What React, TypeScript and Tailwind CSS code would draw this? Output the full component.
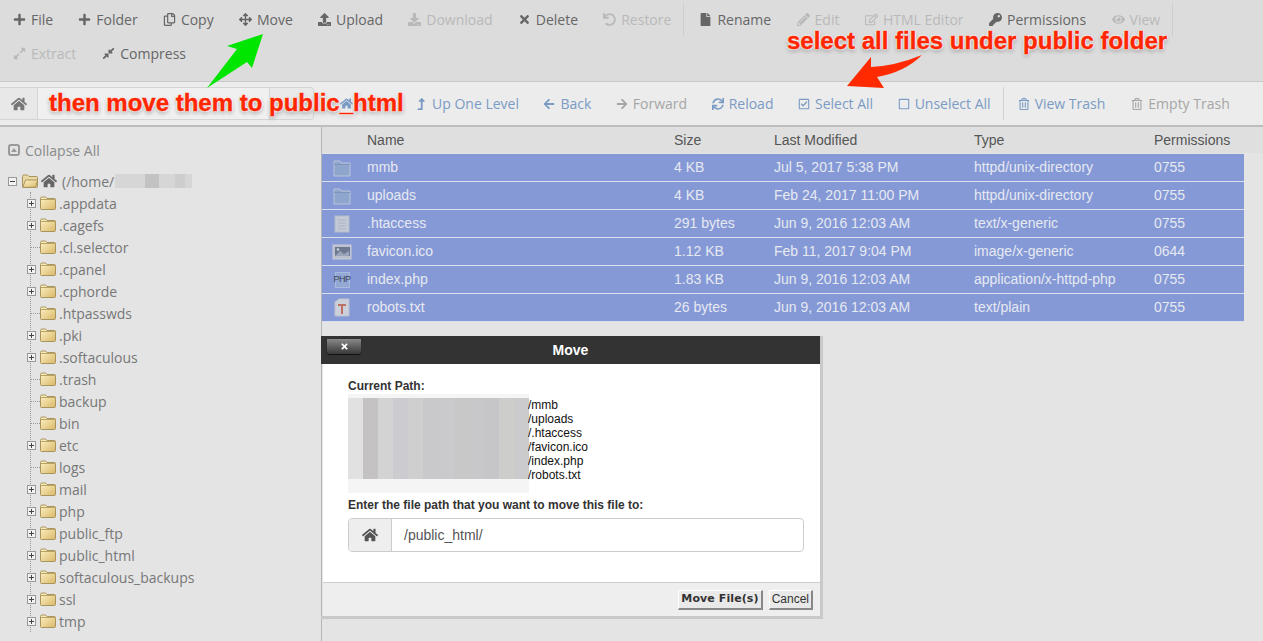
import React from "react";
import {
  FaPlus, FaRegCopy, FaArrowsAlt, FaUpload, FaDownload, FaTimes, FaUndo, FaFile, FaPencilAlt, FaRegEdit,
  FaKey, FaEye, FaExpandAlt, FaCompressAlt, FaHome, FaLevelUpAlt, FaArrowLeft, FaArrowRight, FaSync,
  FaRegCheckSquare, FaRegSquare, FaRegTrashAlt,
} from "react-icons/fa";

type Tool = { label: string; icon: React.ElementType; off?: boolean };

const toolsA: Tool[] = [
  { label: "File", icon: FaPlus },
  { label: "Folder", icon: FaPlus },
  { label: "Copy", icon: FaRegCopy },
  { label: "Move", icon: FaArrowsAlt },
  { label: "Upload", icon: FaUpload },
  { label: "Download", icon: FaDownload, off: true },
  { label: "Delete", icon: FaTimes },
  { label: "Restore", icon: FaUndo, off: true },
];
const toolsB: Tool[] = [
  { label: "Rename", icon: FaFile },
  { label: "Edit", icon: FaPencilAlt, off: true },
  { label: "HTML Editor", icon: FaRegEdit, off: true },
  { label: "Permissions", icon: FaKey },
  { label: "View", icon: FaEye, off: true },
];

const navA: Tool[] = [
  { label: "Up One Level", icon: FaLevelUpAlt },
  { label: "Back", icon: FaArrowLeft },
  { label: "Forward", icon: FaArrowRight, off: true },
  { label: "Reload", icon: FaSync },
  { label: "Select All", icon: FaRegCheckSquare },
  { label: "Unselect All", icon: FaRegSquare },
];

const tree: { name: string; plus: boolean }[] = [
  { name: ".appdata", plus: true },
  { name: ".cagefs", plus: true },
  { name: ".cl.selector", plus: false },
  { name: ".cpanel", plus: true },
  { name: ".cphorde", plus: true },
  { name: ".htpasswds", plus: false },
  { name: ".pki", plus: true },
  { name: ".softaculous", plus: true },
  { name: ".trash", plus: false },
  { name: "backup", plus: false },
  { name: "bin", plus: false },
  { name: "etc", plus: true },
  { name: "logs", plus: false },
  { name: "mail", plus: true },
  { name: "php", plus: true },
  { name: "public_ftp", plus: true },
  { name: "public_html", plus: true },
  { name: "softaculous_backups", plus: true },
  { name: "ssl", plus: true },
  { name: "tmp", plus: true },
];

const files = [
  { name: "mmb", size: "4 KB", date: "Jul 5, 2017 5:38 PM", type: "httpd/unix-directory", perm: "0755", icon: "dir" },
  { name: "uploads", size: "4 KB", date: "Feb 24, 2017 11:00 PM", type: "httpd/unix-directory", perm: "0755", icon: "dir" },
  { name: ".htaccess", size: "291 bytes", date: "Jun 9, 2016 12:03 AM", type: "text/x-generic", perm: "0755", icon: "doc" },
  { name: "favicon.ico", size: "1.12 KB", date: "Feb 11, 2017 9:04 PM", type: "image/x-generic", perm: "0644", icon: "img" },
  { name: "index.php", size: "1.83 KB", date: "Jun 9, 2016 12:03 AM", type: "application/x-httpd-php", perm: "0755", icon: "php" },
  { name: "robots.txt", size: "26 bytes", date: "Jun 9, 2016 12:03 AM", type: "text/plain", perm: "0755", icon: "txt" },
];

const paths = ["/mmb", "/uploads", "/.htaccess", "/favicon.ico", "/index.php", "/robots.txt"];

const blurCols = [
  "bg-[#e2e1e1]", "bg-[#c5c2c4]", "bg-[#d3d3d3]", "bg-[#cbcbd0]", "bg-[#cfcfcf]", "bg-[#c9c8ca]",
  "bg-[#cac9cb]", "bg-[#c8c8c8]", "bg-[#c8c8cb]", "bg-[#c6c5c7]", "bg-[#cdcdcc]", "bg-[#cbcbce]",
];

const ToolButton = ({ tool }: { tool: Tool }) => {
  const Icon = tool.icon;
  return (
    <span className={`flex items-center gap-[5px] whitespace-nowrap ${tool.off ? "text-[#b9b9b9]" : "text-[#666]"}`}>
      <Icon className="text-[13px]" />
      {tool.label}
    </span>
  );
};

const NavButton = ({ tool }: { tool: Tool }) => {
  const Icon = tool.icon;
  return (
    <span className={`flex items-center gap-[5px] whitespace-nowrap ${tool.off ? "text-[#a6a6a6]" : "text-[#7b9bc4]"}`}>
      <Icon className="text-[12px]" />
      {tool.label}
    </span>
  );
};

const Folder = ({ open }: { open?: boolean }) => (
  <svg width="16" height="14" viewBox="0 0 16 14" className="shrink-0">
    <defs>
      <linearGradient id="folderFill" x1="0" y1="0" x2="1" y2="1">
        <stop offset="0" stopColor="#fff4c8" />
        <stop offset="1" stopColor="#d8b768" />
      </linearGradient>
    </defs>
    <path d="M.5 2.5 Q.5 1 2 1 H5.5 L7 2.5 H14.5 Q15.5 2.5 15.5 3.5 V12.5 Q15.5 13.5 14.5 13.5 H1.5 Q.5 13.5 .5 12.5 Z" fill={open ? "#e8d8a4" : "url(#folderFill)"} stroke="#a8945c" />
    {open ? (
      <path d="M.8 13.3 L3.5 6 H15.7 L13.5 13.3 Z" fill="url(#folderFill)" stroke="#a8945c" />
    ) : (
      <path d="M1 3.5 H15" stroke="#b9a468" />
    )}
  </svg>
);

const Toggle = ({ open }: { open?: boolean }) => (
  <span className="relative z-10 flex h-[9px] w-[9px] items-center justify-center border border-[#999] bg-[#f2f2f2]">
    <span className="absolute h-px w-[5px] bg-[#444]" />
    {!open && <span className="absolute h-[5px] w-px bg-[#444]" />}
  </span>
);

const FileIcon = ({ kind }: { kind: string }) => {
  if (kind === "dir")
    return (
      <svg width="18" height="18" viewBox="0 0 18 18">
        <path d="M1 2 H7 L8 4 H17 V17 H1 Z" fill="#8ea6cc" stroke="#b9c4da" />
        <path d="M1 5.5 H17" stroke="#7d96bf" />
      </svg>
    );
  if (kind === "doc")
    return (
      <svg width="18" height="18" viewBox="0 0 18 18">
        <rect x="2" y="1" width="14" height="16" fill="#c3c9d6" stroke="#b4bbca" />
        <path d="M5 5 H13 M5 8 H13 M5 11 H13 M5 14 H13" stroke="#aab2c4" />
      </svg>
    );
  if (kind === "img")
    return (
      <svg width="20" height="18" viewBox="0 0 20 18">
        <rect x="1" y="2" width="18" height="14" fill="#b9bfcc" stroke="#c9cdd6" />
        <rect x="3" y="4" width="15" height="9" fill="#6e7890" />
        <circle cx="6" cy="6.5" r="1.2" fill="#cfd4de" />
        <path d="M3 13 L8 8 L12 11 L17 8 V13 Z" fill="#9aa4b8" />
      </svg>
    );
  if (kind === "php")
    return (
      <span className="flex h-[16px] w-[15px] items-center justify-center border border-[#a9bbdd] bg-[#94a8d6] font-['Liberation_Sans',sans-serif] text-[9px] font-normal tracking-[-0.5px] text-[#3a4256]">
        PHP
      </span>
    );
  return (
    <svg width="16" height="19" viewBox="0 0 16 19">
      <path d="M1 4 L5 1 H15 V18 H1 Z" fill="#ccd0da" stroke="#bcc1cd" />
      <path d="M4 6 H12 V8 H9 V16 H7 V8 H4 Z" fill="#c07062" />
    </svg>
  );
};

export default function App() {
  return (
    <div className="relative h-[641px] w-[1263px] overflow-hidden bg-[#e4e4e4] font-['Open_Sans',sans-serif] text-[14px]">
      {/* top toolbar */}
      <div className="h-[82px] border-b border-[#c9c9c9] bg-[#dcdcdc] pl-[13px]">
        <div className="flex h-[39px] items-center">
          <div className="flex gap-[25.2px]">
            {toolsA.map((t) => (
              <ToolButton key={t.label} tool={t} />
            ))}
          </div>
          <div className="ml-3 h-[33px] w-px bg-[#cdcdcd]" />
          <div className="ml-[15px] flex gap-[25.5px]">
            {toolsB.map((t) => (
              <ToolButton key={t.label} tool={t} />
            ))}
          </div>
          <div className="ml-3 h-[33px] w-px bg-[#cdcdcd]" />
        </div>
        <div className="flex h-[29px] items-center gap-[26px]">
          <ToolButton tool={{ label: "Extract", icon: FaExpandAlt, off: true }} />
          <ToolButton tool={{ label: "Compress", icon: FaCompressAlt }} />
        </div>
      </div>

      {/* path + nav bar */}
      <div className="flex h-[45px] items-center border-b-2 border-[#bdbdbd] bg-[#ececec]">
        <div className="flex h-[33px] w-[314px] shrink-0 rounded-r border border-l-0 border-[#d4d4d4]">
          <span className="flex w-[38px] items-center justify-center border-r border-[#d4d4d4] bg-[#e8e8e8] text-[#777]">
            <FaHome className="text-[16px]" />
          </span>
          <span className="flex-1 bg-[#f0f0f0]" />
          <span className="w-[44px] rounded-r border-l border-[#d4d4d4] bg-[#eaeaea]" />
        </div>
        <FaHome className="ml-[26px] shrink-0 text-[13px] text-[#7b9bc4]" />
        <div className="ml-[62px] flex gap-[24.5px]">
          {navA.map((t) => (
            <NavButton key={t.label} tool={t} />
          ))}
        </div>
        <div className="ml-3 h-[33px] w-px bg-[#d2d2d2]" />
        <div className="ml-[14px] flex gap-[26px]">
          <NavButton tool={{ label: "View Trash", icon: FaRegTrashAlt }} />
          <NavButton tool={{ label: "Empty Trash", icon: FaRegTrashAlt, off: true }} />
        </div>
      </div>

      <div className="flex">
        {/* sidebar tree */}
        <aside className="h-[514px] w-[322px] shrink-0 overflow-hidden border-r border-[#b5b5b5] pl-2 pt-[12px] text-[#777]">
          <div className="flex h-[22px] items-center gap-[5px]">
            <span className="flex h-[12px] w-[12px] items-center justify-center rounded-[3px] border-2 border-[#999]">
              <span className="h-0 w-0 border-x-[3px] border-b-[4px] border-x-transparent border-b-[#999]" />
            </span>
            <span className="text-[#8a8a8a]">Collapse All</span>
          </div>
          <div className="mt-[9px] flex h-[22px] items-center">
            <Toggle open />
            <span className="ml-[5px]">
              <Folder open />
            </span>
            <FaHome className="ml-[3px] text-[16px] text-[#666]" />
            <span className="ml-[5px]">(/home/</span>
            <span className="ml-px flex h-[14px] w-[77px] bg-[#d6d6d6]">
              <span className="ml-[30px] w-[14px] bg-[#c2c2c2]" />
              <span className="ml-[16px] w-[10px] bg-[#cdcdcd]" />
            </span>
          </div>
          <div className="relative">
            <div className="absolute bottom-0 left-[22px] top-0 border-l border-dotted border-[#999]" />
            {tree.map((f) => (
              <div key={f.name} className="flex h-[22px] items-center pl-[19px]">
                <span className="flex w-[13px] items-center">
                  {f.plus ? <Toggle /> : <span className="ml-[4px] w-[9px] border-t border-dotted border-[#999]" />}
                </span>
                <Folder />
                <span className="ml-[3px] whitespace-nowrap">{f.name}</span>
              </div>
            ))}
          </div>
        </aside>

        {/* file table */}
        <main className="flex-1 font-['Liberation_Sans',sans-serif]">
          <div className="flex h-[26px] items-center bg-[#dfdfdf] text-[#555]">
            <span className="w-[45px]" />
            <span className="w-[307px]">Name</span>
            <span className="w-[100px]">Size</span>
            <span className="w-[200px]">Last Modified</span>
            <span className="w-[180px]">Type</span>
            <span>Permissions</span>
          </div>
          <div className="mr-[19px] mt-px">
            {files.map((f) => (
              <div key={f.name} className="flex h-[28px] items-center border-b border-[#d9dfee] bg-[#8599d6] text-[#e6e9f2]">
                <span className="flex w-[45px] justify-center pr-[5px]">
                  <FileIcon kind={f.icon} />
                </span>
                <span className="w-[307px]">{f.name}</span>
                <span className="w-[100px]">{f.size}</span>
                <span className="w-[200px]">{f.date}</span>
                <span className="w-[180px]">{f.type}</span>
                <span>{f.perm}</span>
              </div>
            ))}
          </div>
        </main>
      </div>

      {/* move dialog */}
      <div className="absolute left-[321px] top-[336px] w-[502px] border-b-[3px] border-r-[3px] border-[#c9c9c9] font-['Liberation_Sans',sans-serif]">
        <div className="relative flex h-[28px] items-center justify-center bg-[#333] text-[14px] font-bold text-white">
          <span className="absolute left-[6px] top-[3px] flex h-[15px] w-[34px] items-center justify-center rounded-b-[3px] bg-gradient-to-b from-[#8a8a8a] to-[#3a3838] shadow-[0_1px_1px_#111]">
            <FaTimes className="text-[9px] text-white" />
          </span>
          Move
        </div>
        <div className="ml-[2px] h-[218px] bg-white px-[25px] pt-[14px] text-[#222]">
          <div className="text-[12px] font-bold leading-[16px] text-[#333]">Current Path:</div>
          <div className="relative h-[99px]">
            <div className="absolute inset-0 flex w-[181px] bg-[#f5f5f5]">
              {blurCols.map((c, i) => (
                <div key={i} className={`mb-[14px] mt-[4px] flex-1 ${c}`} />
              ))}
            </div>
            <div className="relative ml-[180px] pt-[4px] text-[12px] leading-[14px] text-[#111]">
              {paths.map((p) => (
                <div key={p}>{p}</div>
              ))}
            </div>
          </div>
          <div className="mt-[4px] text-[12px] font-bold leading-[16px] text-[#333]">
            Enter the file path that you want to move this file to:
          </div>
          <div className="mt-[5px] flex h-[34px] w-[456px] overflow-hidden rounded border border-[#ccc]">
            <span className="flex w-[43px] items-center justify-center border-r border-[#ccc] bg-[#eee] text-[#555]">
              <FaHome className="text-[16px]" />
            </span>
            <span className="flex items-center pl-[12px] text-[14px] text-[#555]">/public_html/</span>
          </div>
        </div>
        <div className="ml-[2px] flex h-[34px] items-center justify-end gap-[6px] border-t border-[#ccc] bg-[#eee] pr-[7px]">
          <span className="flex h-[20px] items-center border-b-2 border-r-2 border-[#888] border-l border-t border-l-white border-t-white bg-[#e9e9e9] px-[2px] font-['DejaVu_Sans',sans-serif] text-[11px] font-bold tracking-[0.1px] text-[#333]">
            Move File(s)
          </span>
          <span className="flex h-[20px] items-center border-b-2 border-r-2 border-[#888] border-l border-t border-l-white border-t-white bg-[#e9e9e9] px-[2px] text-[12px] text-[#333]">
            Cancel
          </span>
        </div>
      </div>

      {/* screenshot annotations */}
      <svg width="1263" height="130" viewBox="0 0 1263 130" className="pointer-events-none absolute left-0 top-0">
        <path d="M263 34 L252 68 L247 62 L207 88 L237 49 L227 46 Z" fill="#00e600" />
        <path d="M847 86 L871 57 L871 67 Q895 66 922 55 Q905 72 877 77 L884 88 Z" fill="#ff2a00" />
      </svg>
      <div className="absolute left-[49px] top-[88px] whitespace-nowrap font-['Liberation_Sans',sans-serif] text-[24px] font-bold leading-[30px] text-[#ff2600] [-webkit-text-stroke:0.4px_#ff2600] [text-shadow:0_0_1px_#fff,0_0_2px_#fff,0_0_2px_#fff,0_0_3px_#fff,0_2px_4px_#888]">
        then move them to public_html
      </div>
      <div className="absolute left-[787px] top-[26px] whitespace-nowrap font-['Liberation_Sans',sans-serif] text-[24px] font-bold leading-[30px] text-[#ff2600] [-webkit-text-stroke:0.4px_#ff2600] [text-shadow:0_0_1px_#fff,0_0_2px_#fff,0_0_2px_#fff,0_0_3px_#fff,0_2px_4px_#888]">
        select all files under public folder
      </div>
    </div>
  );
}
